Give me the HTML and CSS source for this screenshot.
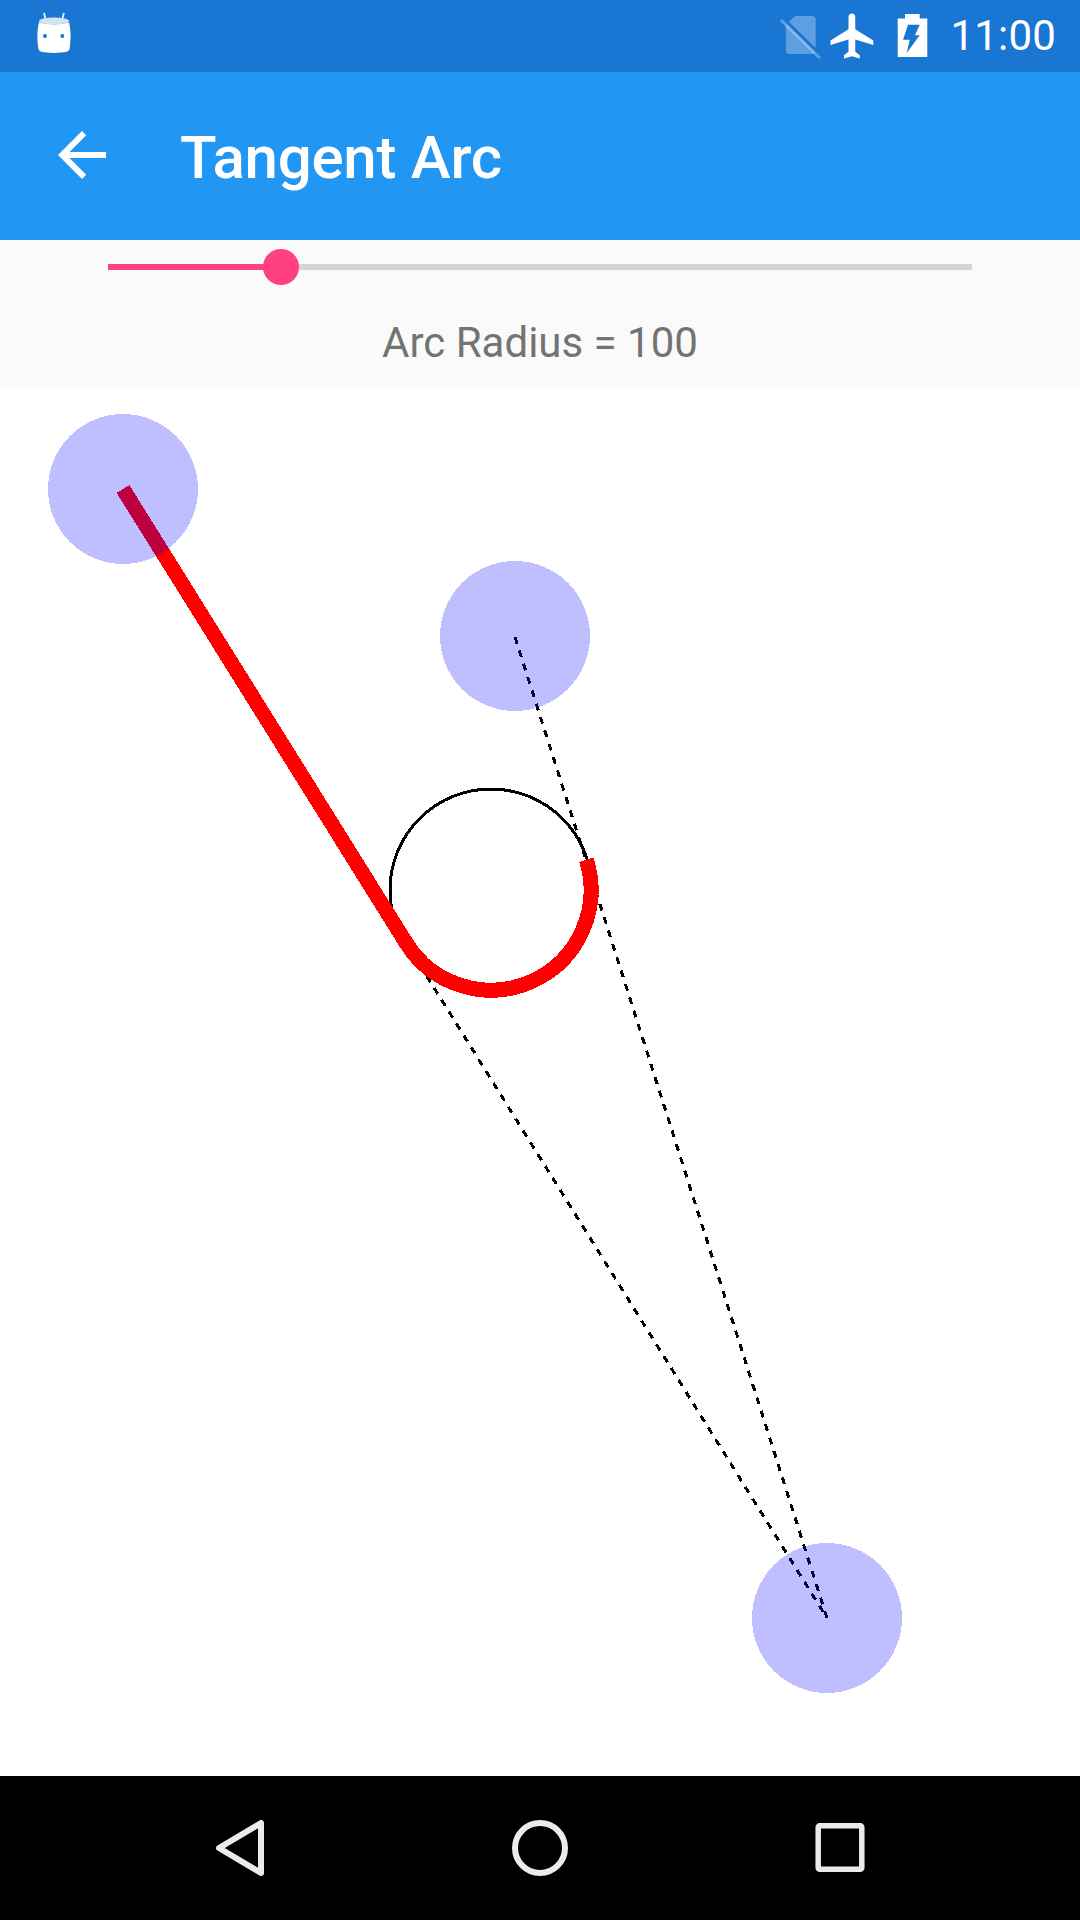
FILE: index.html
```html
<!DOCTYPE html>
<html lang="en">
  <head>
    <meta charset="UTF-8" />
    <title>Tangent Arc</title>
    <meta name="viewport" content="width=device-width, initial-scale=1.0" />
    <link rel="stylesheet" href="styles.css">
  </head>

  <body>
    <div class="status-bar">
      <svg class="notif-icon" width="48" height="50" viewBox="0 0 48 50">
        <path d="M14 5l1.700 7M34 5l-2 7" stroke="#fff" stroke-width="1.600" fill="none" />
        <path d="M9 14C7 22 7 33 8.500 41C9 44 13 44.500 24 45C35 44.500 39 44 39.500 41C41 33 41 22 39 14C35 17 13 17 9 14z" fill="#fff" />
        <ellipse cx="24" cy="13" rx="15" ry="3.500" fill="#d2e3f5" />
        <circle cx="15" cy="28" r="2" fill="#1976d2" />
        <circle cx="32.300" cy="28" r="2" fill="#1976d2" />
      </svg>
      <div class="status-right">
        <svg width="46" height="54" viewBox="0 0 46 54">
          <path d="M16 7H33.500C35.300 7 36.700 8.400 36.700 10.200V41.800C36.700 43.600 35.300 45 33.500 45H10C8.200 45 6.800 43.600 6.800 41.800V16z" fill="#fff" fill-opacity="0.3" />
          <path d="M4 9.500L43 47.500" stroke="#1976d2" stroke-width="3.500" />
          <path d="M2 11L41 49.300" stroke="#fff" stroke-opacity="0.3" stroke-width="3" />
        </svg>
        <svg width="54" height="54" viewBox="0 0 24 24">
          <path d="M21 16v-2l-8-5V3.500c0-.83-.67-1.500-1.500-1.500S10 2.670 10 3.500V9l-8 5v2l8-2.500V19l-2 1.500V22l3.500-1 3.500 1v-1.500L13 19v-5.500l8 2.500z" fill="#fff" />
        </svg>
        <svg class="battery-icon" width="42" height="54" viewBox="0 0 42 54">
          <path fill-rule="evenodd" d="M13 5H27.700V9.500H35.300V48H5.700V9.500H13zM16 15.700L11 30.700H17.700L14.700 44L27.700 26.300H23L27.700 15.700z" fill="#fff" />
        </svg>
        <span class="clock">11:00</span>
      </div>
    </div>

    <div class="app-bar">
      <svg width="72" height="72" viewBox="0 0 24 24">
        <path d="M20 11H7.830l5.590-5.590L12 4l-8 8 8 8 1.410-1.410L7.830 13H20v-2z" fill="#fff" />
      </svg>
      <h1>Tangent Arc</h1>
    </div>

    <div class="controls">
      <div class="slider">
        <div class="slider-fill" style="width: 20%"></div>
        <div class="slider-thumb" style="left: 20%"></div>
      </div>
      <p class="radius-label">Arc Radius = 100</p>
    </div>

    <!-- viewBox keeps screen coordinates, the canvas starts at y 387 -->
    <svg class="canvas" width="1080" height="1389" viewBox="0 387 1080 1389">
      <path class="guide" d="M515 637L827 1618" />
      <path class="guide" d="M123 489L827 1618" />
      <circle class="arc-circle" cx="491" cy="890" r="101" />
      <path class="tangent" d="M123 489L406.100 942.900A100 100 0 0 0 586.300 859.750" />
      <circle class="handle" cx="123" cy="489" r="75" />
      <circle class="handle" cx="515" cy="636" r="75" />
      <circle class="handle" cx="827" cy="1618" r="75" />
    </svg>

    <div class="nav-bar">
      <svg width="72" height="72" viewBox="0 0 72 72">
        <path class="nav-stroke" d="M15 36L57 11V61z" />
      </svg>
      <svg width="72" height="72" viewBox="0 0 72 72">
        <circle class="nav-stroke" cx="36" cy="36" r="25" />
      </svg>
      <svg width="72" height="72" viewBox="0 0 72 72">
        <rect class="nav-stroke recents" x="14.200" y="13.700" width="43.600" height="43.600" rx="1.500" />
      </svg>
    </div>
  </body>
</html>
```

FILE: styles.css
```css
body {
  margin: 0;
  width: 1080px;
  height: 1920px;
  overflow: hidden;
  font-family: "Roboto", sans-serif;
  background-color: rgb(255, 255, 255);
}

svg {
  display: block;
}

.status-bar {
  height: 72px;
  background-color: #1976d2;
  display: flex;
  align-items: center;
  justify-content: space-between;
  padding-left: 30px;
  color: rgb(255, 255, 255);
}

.notif-icon {
  margin-top: -6px;
}

.status-right {
  display: flex;
  align-items: center;
  margin-right: 24px;
}

.status-right svg {
  margin-right: 1px;
}

.status-right .battery-icon {
  margin: 0 0 0 11px;
}

.clock {
  font-size: 42px;
  line-height: 54px;
  margin-left: 16px;
  letter-spacing: 0.2px;
}

.app-bar {
  height: 168px;
  background-color: #2196f3;
  display: flex;
  align-items: center;
  padding-left: 46px;
}

.app-bar svg {
  margin-top: -2px;
}

h1 {
  margin: 4px 0 0 62px;
  font-size: 60px;
  font-weight: 500;
  line-height: 72px;
  letter-spacing: -0.25px;
  color: rgb(255, 255, 255);
}

.controls {
  height: 147px;
  background-color: #fafafa;
  overflow: hidden;
}

.slider {
  position: relative;
  height: 6px;
  margin: 24px 108px 0;
  background-color: #d4d4d4;
}

.slider-fill {
  height: 100%;
  background-color: #ff4081;
}

.slider-thumb {
  position: absolute;
  top: -15px;
  width: 36px;
  height: 36px;
  margin-left: -18px;
  border-radius: 50%;
  background-color: #ff4081;
}

.radius-label {
  margin: 49px 0 0;
  font-size: 42px;
  line-height: 48px;
  text-align: center;
  color: #737373;
}

.canvas {
  shape-rendering: crispEdges;
}

.guide {
  fill: none;
  stroke: rgb(0, 0, 0);
  stroke-width: 3;
  stroke-dasharray: 7 7;
}

.arc-circle {
  fill: none;
  stroke: rgb(0, 0, 0);
  stroke-width: 3;
}

.tangent {
  fill: none;
  stroke: rgb(255, 0, 0);
  stroke-width: 15;
}

.handle {
  fill: rgba(0, 0, 255, 0.25);
}

.nav-bar {
  height: 144px;
  background-color: rgb(0, 0, 0);
  box-sizing: border-box;
  padding: 0 90px;
  display: grid;
  grid-template-columns: repeat(3, 1fr);
  align-items: center;
  justify-items: center;
}

.nav-stroke {
  fill: none;
  stroke: #ebebeb;
  stroke-width: 6;
  stroke-linejoin: round;
}

.recents {
  stroke-width: 5.5;
}
```
